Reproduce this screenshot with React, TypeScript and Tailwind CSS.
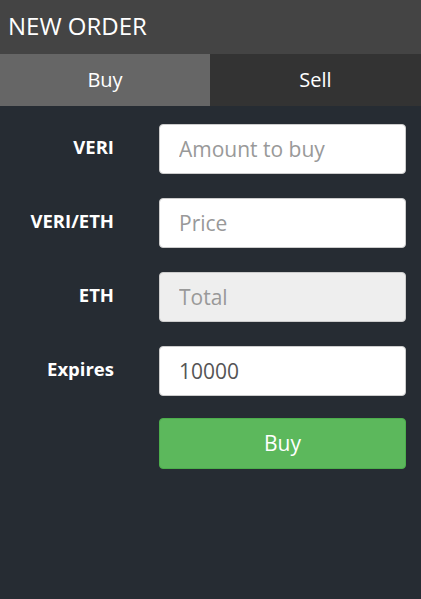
export default function App() {
  const rows = [
    { label: "VERI", placeholder: "Amount to buy", value: "", disabled: false },
    { label: "VERI/ETH", placeholder: "Price", value: "", disabled: false },
    { label: "ETH", placeholder: "Total", value: "", disabled: true },
    { label: "Expires", placeholder: "", value: "10000", disabled: false },
  ];

  return (
    <div className="w-[421px] h-[599px] bg-[#262c33] font-['Open_Sans',sans-serif] flex flex-col">
      <div className="h-[54px] bg-[#444444] flex items-center px-[8px]">
        <h2 className="text-white text-[24px] leading-none -mt-[2px]">NEW ORDER</h2>
      </div>

      <div className="flex h-[52px]">
        <button className="w-[210px] bg-[#666666] text-white text-[20px]">Buy</button>
        <button className="flex-1 bg-[#333333] text-white text-[20px]">Sell</button>
      </div>

      <div className="pt-[18px] pr-[15px] grid grid-cols-[114px_1fr] gap-x-[45px] gap-y-[24px]">
        {rows.map((r) => (
          <div key={r.label} className="contents">
            <label className="flex items-center justify-end pb-[4px] text-white font-bold text-[18.5px]">
              {r.label}
            </label>
            <input
              readOnly
              disabled={r.disabled}
              placeholder={r.placeholder}
              defaultValue={r.value}
              className={
                "w-full min-w-0 h-[50px] rounded-[4px] border border-[#cccccc] px-[19px] text-[21px] text-[#555555] placeholder:text-[#999999] outline-none " +
                (r.disabled ? "bg-[#eeeeee]" : "bg-white")
              }
            />
          </div>
        ))}
        <div />
        <button className="w-full h-[51px] -mt-[2px] rounded-[4px] border border-[#4cae4c] bg-[#5cb85c] text-white text-[21px]">
          Buy
        </button>
      </div>
    </div>
  );
}
